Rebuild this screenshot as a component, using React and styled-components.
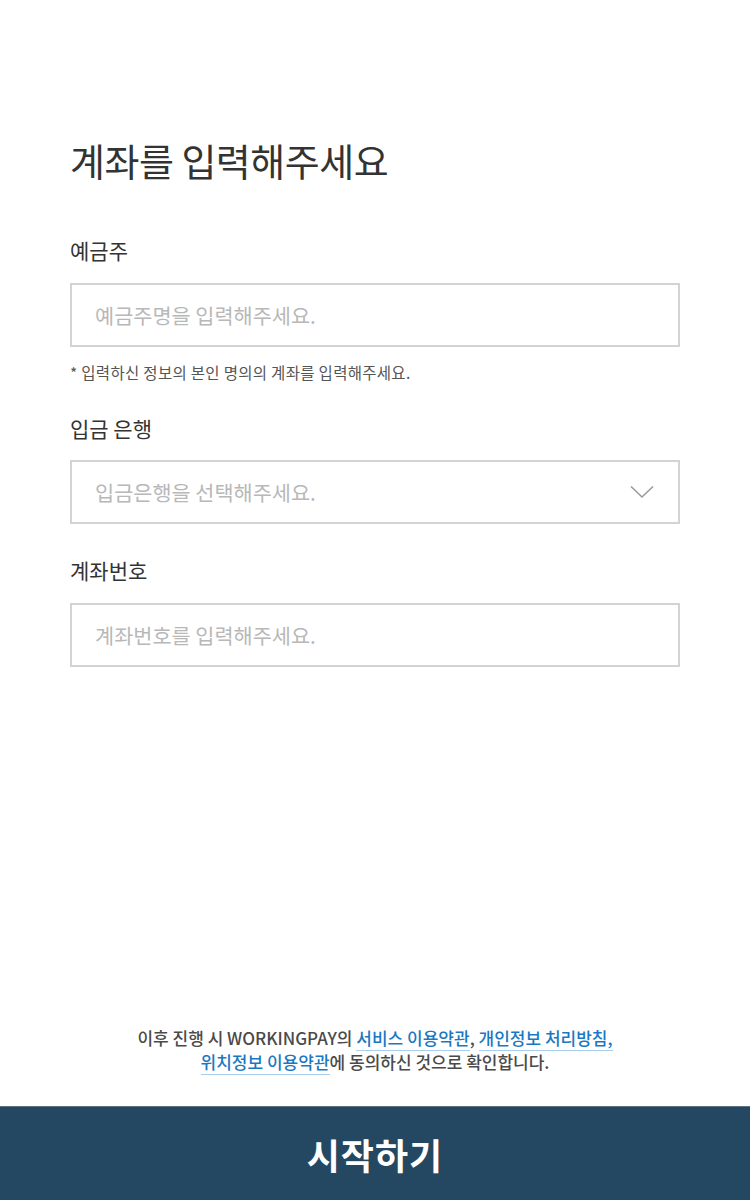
import styled, { createGlobalStyle } from "styled-components"

const GlobalStyle = createGlobalStyle`
  html, body {
    margin: 0;
    padding: 0;
    background: #fff;
  }
  body {
    font-family: "Noto Sans CJK KR", "Noto Sans", sans-serif;
  }
  * {
    box-sizing: border-box;
  }
`

const Page = styled.div`
  min-height: 100vh;
  display: flex;
  flex-direction: column;
`
const Content = styled.main`
  flex: 1;
  padding: 137px 70px 0;
`
const Title = styled.h1`
  margin: 0 0 52px;
  font-size: 38px;
  line-height: 46px;
  font-weight: 400;
  color: #333;
  letter-spacing: -0.5px;
`
const Field = styled.div`
  margin-bottom: ${(p) => p.$gap || 31}px;
`
const Label = styled.div`
  font-size: 21px;
  line-height: 30px;
  color: #333;
  margin-bottom: ${(p) => p.$gap || 18}px;
`
const Input = styled.input`
  display: block;
  width: 100%;
  height: 64px;
  border: 2px solid #d3d3d3;
  padding: 0 23px;
  font-family: inherit;
  font-size: 20.8px;
  color: #333;
  outline: none;
  border-radius: 0;
  &::placeholder {
    color: #b8b8b8;
  }
`
const Select = styled.div`
  display: flex;
  align-items: center;
  justify-content: space-between;
  height: 64px;
  border: 2px solid #d3d3d3;
  padding: 0 24px 0 23px;
  font-size: 20.8px;
  color: #b8b8b8;
`
const Help = styled.p`
  margin: 15px 0 0;
  font-size: 15.5px;
  line-height: 20px;
  color: #555;
  letter-spacing: 0.3px;
`
const Footer = styled.footer`
  display: flex;
  flex-direction: column;
`
const Notice = styled.p`
  margin: 0 0 32px;
  text-align: center;
  font-size: 17px;
  line-height: 24px;
  font-weight: 500;
  color: #4a4a4a;
`
const TermLink = styled.a`
  color: #1a78c2;
  text-decoration: none;
  border-bottom: 1px solid #a9cfee;
`
const StartButton = styled.button`
  height: 94px;
  width: 100%;
  border: none;
  border-top: 1px solid #5b7184;
  background: #244862;
  color: #fff;
  font-family: inherit;
  font-size: 36px;
  font-weight: 700;
  letter-spacing: 1px;
`

function Chevron() {
  return (
    <svg width="24" height="14" viewBox="0 0 24 14" fill="none">
      <path d="M1 1.5 L12 12 L23 1.5" stroke="#9a9a9a" strokeWidth="1.6" />
    </svg>
  )
}

function App() {
  return (
    <Page>
      <GlobalStyle />
      <Content>
        <Title>계좌를 입력해주세요</Title>
        <Field>
          <Label>예금주</Label>
          <Input placeholder="예금주명을 입력해주세요." />
          <Help>* 입력하신 정보의 본인 명의의 계좌를 입력해주세요.</Help>
        </Field>
        <Field>
          <Label $gap={17}>입금 은행</Label>
          <Select>
            <span>입금은행을 선택해주세요.</span>
            <Chevron />
          </Select>
        </Field>
        <Field>
          <Label>계좌번호</Label>
          <Input placeholder="계좌번호를 입력해주세요." />
        </Field>
      </Content>
      <Footer>
        <Notice>
          이후 진행 시 WORKINGPAY의 <TermLink href="#">서비스 이용약관</TermLink>,{" "}
          <TermLink href="#">개인정보 처리방침,</TermLink>
          <br />
          <TermLink href="#">위치정보 이용약관</TermLink>에 동의하신 것으로 확인합니다.
        </Notice>
        <StartButton>시작하기</StartButton>
      </Footer>
    </Page>
  )
}

export default App
